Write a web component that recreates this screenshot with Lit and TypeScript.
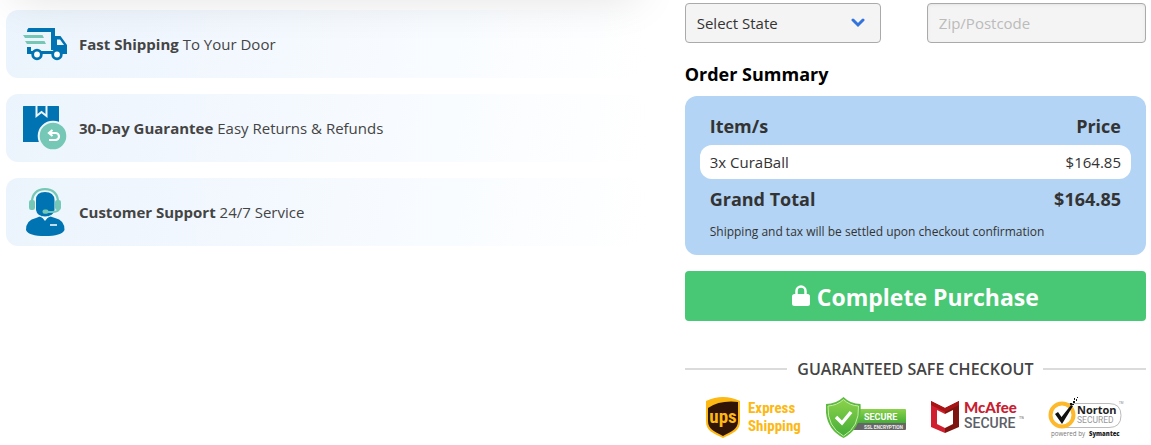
import { LitElement, html, css } from "lit";
import { customElement, property } from "lit/decorators.js";

interface OrderItem {
  name: string;
  price: string;
}

const truckIcon = html`<svg width="48" height="48" viewBox="0 0 48 48" aria-hidden="true">
  <g fill="#0074b3">
    <path d="M6.500 8H33v22h-4V12H5Q5 9 6.500 8zM5 27h4v4h30v3H5z"/>
    <path fill-rule="evenodd" d="M33 16h5.500L45 25v9H33zm2 3.500V25h7l-4-5.500z"/>
  </g>
  <circle cx="15" cy="34.500" r="4.300" fill="#fff" stroke="#0074b3" stroke-width="2.800"/>
  <circle cx="35" cy="34.500" r="4.300" fill="#fff" stroke="#0074b3" stroke-width="2.800"/>
  <path fill="#75c8b5" d="M1 15h19.500l1.500 3H3zM3 21h19.500l1.500 3H5z"/>
</svg>`;

const boxIcon = html`<svg width="48" height="48" viewBox="0 0 48 48" aria-hidden="true">
  <rect x="1" y="2" width="36" height="36" rx="0.500" fill="#0074b3"/>
  <path fill="none" stroke="#eef6fd" stroke-width="2" d="M14.500 2v10l5-4 5 4V2"/>
  <circle cx="31" cy="32" r="14.300" fill="#75c8b5" stroke="#eef6fd" stroke-width="2"/>
  <path d="M30.500 26l-3.500 3 3.500 3M27 29h6.500a3 3 0 0 1 0 7H27" fill="none" stroke="#fff" stroke-width="2.200"/>
</svg>`;

const agentIcon = html`<svg width="48" height="48" viewBox="0 0 48 48" aria-hidden="true">
  <path fill="#0074b3" d="M14 12Q14 4 23 4t9.500 8v10q-1 6-9.500 6.500Q15 28 14 22z"/>
  <path fill="#0074b3" d="M4 42q0-10 10-12l5-2 4 5 4-5 6 2q9.500 2 9.500 12-3 6-19.500 6T4 42z"/>
  <path fill="none" stroke="#eef6fd" d="M17.500 28l5.500 2.500 5.500-2.500"/>
  <path fill="none" stroke="#75c8b5" stroke-width="2.200" d="M10 14C10 6 15 1.200 23 1.200S36 6 36 14M37 21q-1 3-7 3h-7"/>
  <rect x="7" y="12" width="6" height="10" rx="2.200" fill="#75c8b5"/>
  <rect x="33" y="12" width="6" height="10" rx="2.200" fill="#75c8b5"/>
  <rect x="20.500" y="21.500" width="6" height="4.200" rx="2" fill="#75c8b5"/>
  <path stroke="#fff" stroke-width="1.500" d="M28 37h7"/>
</svg>`;

@customElement("benefit-item")
export class BenefitItem extends LitElement {
  @property() heading = "";
  @property() detail = "";

  static styles = css`
    :host {
      display: flex;
      align-items: center;
      gap: 9px;
      height: 68px;
      padding: 0 16px;
      border-radius: 12px;
      background: linear-gradient(100deg, #ebf4fc, #f0f6fe 20%, #f7fbff 60%, #fff);
      color: #444;
      font-size: 15px;
      line-height: 24px;
    }
    .icon {
      display: flex;
    }
  `;

  render() {
    return html`<span class="icon"><slot></slot></span>
      <span><strong>${this.heading}</strong> ${this.detail}</span>`;
  }
}

@customElement("trust-logos")
export class TrustLogos extends LitElement {
  static styles = css`
    :host {
      display: flex;
      justify-content: space-between;
      align-items: flex-start;
      padding: 0 22px 0 21px;
    }
    svg {
      display: block;
    }
    .express {
      font: bold 15px "Roboto Condensed", "Liberation Sans Narrow", Roboto, sans-serif;
    }
    .ups {
      font: bold 19px "Roboto Condensed", "Liberation Sans Narrow", Roboto, sans-serif;
    }
    .roboto {
      font-family: Roboto, sans-serif;
    }
    .lato {
      font-family: Lato, sans-serif;
    }
    .sans {
      font-family: "Open Sans", sans-serif;
    }
  `;

  render() {
    return html`
      <svg width="97" height="42" viewBox="0 0 97 42" role="img" aria-label="UPS Express Shipping">
        <path fill="#fdb813" d="M0 4Q17-4 34 4v20c0 10-7 12-17 17C7 36 0 34 0 24z"/>
        <path fill="#301506" d="M2 11Q14 3 32 5v19c0 8-6 10-15 15C8 34 2 32 2 24z"/>
        <text class="ups" x="17" y="26" text-anchor="middle" fill="#fdb813">ups</text>
        <text class="express" x="42" y="16" fill="#fdb813">Express</text>
        <text class="express" x="42" y="34" fill="#fdb813">Shipping</text>
      </svg>
      <svg width="81" height="42" viewBox="0 0 81 42" role="img" aria-label="Secure SSL encryption">
        <defs>
          <linearGradient id="green" x2="0" y2="1">
            <stop stop-color="#8bd24a"/><stop offset="1" stop-color="#45ae38"/>
          </linearGradient>
        </defs>
        <path fill="url(#green)" d="M26 12h53q1 0 1 1v13H26z"/>
        <path fill="#666" d="M26 26h54v6q0 1-1 1H26z"/>
        <path fill="#5dba3f" d="M17.500 0q7 7 17 7 2 24-17 34Q-2 31 0 7q10 0 17.500-7z"/>
        <path fill="url(#green)" stroke="#c6ecaa" d="M17.500 2.500q6 6 15 6.500 1 21-15 30Q1 30 2 9q9-.5 15.500-6.500z"/>
        <path fill="none" stroke="#fff" stroke-width="3.500" d="M10 20l6 6 9-11"/>
        <text class="roboto" x="38" y="23" font-size="9" font-weight="700" fill="#fff">SECURE</text>
        <text class="roboto" x="38" y="32" font-size="4.800" font-weight="700" fill="#eee">SSL ENCRYPTION</text>
      </svg>
      <svg width="93" height="42" viewBox="0 0 93 42" role="img" aria-label="McAfee Secure">
        <path fill="#d01f2e" d="M0 4l14 7v6L6 13v14l8 4v5L0 30z"/>
        <path fill="#7d1410" d="M28 4l-14 7v6l8-4v14l-8 4v5l14-6z"/>
        <path fill="#a81516" d="M0 4l14 7L28 4v4l-14 7L0 8z"/>
        <text class="lato" x="33" y="16" font-size="15" font-weight="900" fill="#c8202f">McAfee</text>
        <text class="roboto" x="33" y="31" font-size="14" font-weight="500" fill="#5c6066">SECURE</text>
        <text class="sans" x="88" y="22" font-size="4" fill="#5c6066">TM</text>
      </svg>
      <svg width="76" height="42" viewBox="0 0 76 42" role="img" aria-label="Norton Secured, powered by Symantec">
        <path fill="#fff" stroke="#bbb" d="M18 6.500h43q12 0 12 12t-12 12H18"/>
        <circle cx="14" cy="18" r="11.500" fill="#fff" stroke="#fdb92b" stroke-width="4"/>
        <path fill="#111" d="M7 17l3-2 3.500 5L23 8l2 1-11 18z"/>
        <path fill="#111" d="M22 6h2v2h-2zM25 4h2v2h-2zM24 7h2v1h-2zM28 2h1v2h-1zM26 1h1v2h-1zM29 0h1v1h-1z"/>
        <text class="sans" x="29" y="17" font-size="11" font-weight="700" fill="#222">Norton</text>
        <text class="roboto" x="29" y="26" font-size="8.500" fill="#999">SECURED</text>
        <text class="sans" x="71" y="7" font-size="3" fill="#777">TM</text>
        <text class="sans" x="3" y="39" font-size="6.200" fill="#777">powered by</text>
        <text class="sans" x="41" y="39" font-size="6" font-weight="800" fill="#222">Symantec</text>
      </svg>
    `;
  }
}

@customElement("app-root")
export class AppRoot extends LitElement {
  @property({ attribute: false }) items: OrderItem[] = [{ name: "3x CuraBall", price: "$164.85" }];
  @property() total = "$164.85";

  static styles = css`
    :host {
      display: block;
      overflow: hidden;
      background: #fff;
      color: #333;
      font: 15px/24px "Open Sans", "Noto Sans", sans-serif;
    }
    * {
      box-sizing: border-box;
    }
    .page {
      display: grid;
      grid-template-columns: 18fr 13fr;
      gap: 40px;
      padding: 0 5px 6px 6px;
    }
    .benefits {
      position: relative;
      display: flex;
      flex-direction: column;
      gap: 16px;
      padding-top: 10px;
    }
    .shade {
      position: absolute;
      inset: -100px 0 auto;
      height: 100px;
      box-shadow: 0 6px 46px -8px rgba(0, 0, 0, 0.12);
      pointer-events: none;
    }
    .checkout {
      padding-top: 3px;
    }
    .fields {
      display: grid;
      grid-template-columns: 17fr 19fr;
      gap: 46px;
    }
    .select {
      display: grid;
      grid-template-columns: 1fr 30px;
      align-items: center;
    }
    .select select {
      grid-area: 1 / 1 / 2 / 3;
    }
    .select svg {
      grid-area: 1 / 2;
      pointer-events: none;
    }
    select,
    input {
      appearance: none;
      width: 100%;
      height: 40px;
      margin: 0;
      padding: 0 11px;
      border: 1px solid #aaa;
      border-radius: 4px;
      background: #f4f4f4;
      color: #333;
      font: inherit;
    }
    input {
      box-shadow: inset 0 1px 3px #e4e4e4;
    }
    input::placeholder {
      color: #bbb;
    }
    h2 {
      margin: 19px 0 10px;
      color: #000;
      font-size: 18px;
      line-height: 24px;
    }
    .summary {
      padding: 12px 15px 15px;
      border-radius: 12px;
      background: #b3d4f4;
    }
    table {
      width: 100%;
      border-spacing: 0;
    }
    th,
    td {
      height: 34px;
      padding: 0 10px;
      text-align: left;
    }
    th {
      font-size: 18px;
    }
    thead th {
      height: 37px;
      padding-bottom: 2px;
    }
    tfoot th {
      height: 40px;
    }
    th:last-child,
    td:last-child {
      text-align: right;
    }
    td {
      background: #fff;
    }
    td:first-child {
      border-radius: 12px 0 0 12px;
    }
    td:last-child {
      border-radius: 0 12px 12px 0;
    }
    .note {
      margin: 5px 10px 0;
      font-size: 12px;
      line-height: 16px;
    }
    button {
      display: flex;
      justify-content: center;
      align-items: center;
      gap: 7px;
      width: 100%;
      height: 50px;
      margin: 16px 0 36px;
      padding: 2px 0 0;
      border: 0;
      border-radius: 4px;
      background: #48c774;
      color: #fff;
      font: bold 23px/32px "Open Sans", "Noto Sans", sans-serif;
      cursor: pointer;
    }
    button svg {
      margin-bottom: 2px;
    }
    .safe {
      display: flex;
      align-items: center;
      gap: 10px;
      margin-bottom: 16px;
      color: #444;
      font-size: 16px;
      font-weight: 600;
    }
    .safe::before,
    .safe::after {
      content: "";
      flex: 1;
      height: 2px;
      background: #dbdbdb;
    }
  `;

  render() {
    return html`
      <main class="page">
        <section class="benefits">
          <benefit-item heading="Fast Shipping" detail="To Your Door">${truckIcon}</benefit-item>
          <benefit-item heading="30-Day Guarantee" detail="Easy Returns &amp; Refunds">${boxIcon}</benefit-item>
          <benefit-item heading="Customer Support" detail="24/7 Service">${agentIcon}</benefit-item>
          <div class="shade"></div>
        </section>
        <section class="checkout">
          <div class="fields">
            <div class="select">
              <select aria-label="State">
                <option>Select State</option>
              </select>
              <svg width="14" height="10" viewBox="0 0 14 10" aria-hidden="true">
                <path d="M2 2l5 5 5-5" fill="none" stroke="#3273dc" stroke-width="3" stroke-linecap="round"/>
              </svg>
            </div>
            <input type="text" aria-label="Zip or postcode" placeholder="Zip/Postcode" />
          </div>
          <h2>Order Summary</h2>
          <div class="summary">
            <table>
              <thead>
                <tr><th scope="col">Item/s</th><th scope="col">Price</th></tr>
              </thead>
              <tbody>
                ${this.items.map((item) => html`<tr><td>${item.name}</td><td>${item.price}</td></tr>`)}
              </tbody>
              <tfoot>
                <tr><th scope="row">Grand Total</th><th>${this.total}</th></tr>
              </tfoot>
            </table>
            <p class="note">Shipping and tax will be settled upon checkout confirmation</p>
          </div>
          <button type="button">
            <svg width="18" height="22" viewBox="0 0 18 22" aria-hidden="true">
              <path d="M4.500 10V6a4.500 4.500 0 0 1 9 0v4" fill="none" stroke="#fff" stroke-width="2.500"/>
              <rect y="9" width="18" height="12" rx="2.500" fill="#fff"/>
            </svg>
            Complete Purchase
          </button>
          <div class="safe">GUARANTEED SAFE CHECKOUT</div>
          <trust-logos></trust-logos>
        </section>
      </main>
    `;
  }
}
